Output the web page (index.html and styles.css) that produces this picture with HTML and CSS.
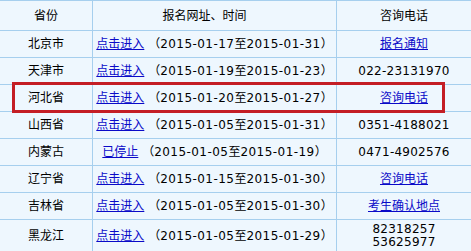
FILE: index.html
```html
<!DOCTYPE html>
<html lang="zh-CN">
<head>
<meta charset="utf-8">
<title>报名网址、时间</title>
<link rel="stylesheet" href="styles.css">
</head>
<body>
<div class="wrap">
  <table class="info">
    <colgroup>
      <col class="c1"><col class="c2"><col class="c3">
    </colgroup>
    <tr class="head">
      <td>省份</td>
      <td class="mid headmid">报名网址、时间</td>
      <td>咨询电话</td>
    </tr>
    <tr>
      <td>北京市</td>
      <td class="mid"><a href="#">点击进入</a> （<span class="d">2015-01-17</span>至<span class="d">2015-01-31</span>）</td>
      <td><a href="#">报名通知</a></td>
    </tr>
    <tr>
      <td>天津市</td>
      <td class="mid"><a href="#">点击进入</a> （<span class="d">2015-01-19</span>至<span class="d">2015-01-23</span>）</td>
      <td class="p">022-23131970</td>
    </tr>
    <tr>
      <td>河北省</td>
      <td class="mid"><a href="#">点击进入</a> （<span class="d">2015-01-20</span>至<span class="d">2015-01-27</span>）</td>
      <td><a href="#">咨询电话</a></td>
    </tr>
    <tr>
      <td>山西省</td>
      <td class="mid"><a href="#">点击进入</a> （<span class="d">2015-01-05</span>至<span class="d">2015-01-31</span>）</td>
      <td class="p">0351-4188021</td>
    </tr>
    <tr>
      <td>内蒙古</td>
      <td class="mid"><a href="#">已停止</a> （<span class="d">2015-01-05</span>至<span class="d">2015-01-19</span>）</td>
      <td class="p">0471-4902576</td>
    </tr>
    <tr>
      <td>辽宁省</td>
      <td class="mid"><a href="#">点击进入</a> （<span class="d">2015-01-15</span>至<span class="d">2015-01-30</span>）</td>
      <td><a href="#">咨询电话</a></td>
    </tr>
    <tr>
      <td>吉林省</td>
      <td class="mid"><a href="#">点击进入</a> （<span class="d">2015-01-05</span>至<span class="d">2015-01-30</span>）</td>
      <td><a href="#">考生确认地点</a></td>
    </tr>
    <tr class="last">
      <td>黑龙江</td>
      <td class="mid"><a href="#">点击进入</a> （<span class="d">2015-01-05</span>至<span class="d">2015-01-29</span>）</td>
      <td class="p two">82318257<br>53625977</td>
    </tr>
  </table>
  <div class="mark"></div>
</div>
</body>
</html>
```

FILE: styles.css
```css
html, body {
  margin: 0;
  padding: 0;
  background: #eef7fe;
}
.wrap {
  position: relative;
  width: 471px;
}
.info {
  width: 471px;
  table-layout: fixed;
  border-collapse: separate;
  border-spacing: 0;
  border-top: 1px solid #a6cfee;
  background: #eef7fe;
  font-family: "DejaVu Sans", "Noto Sans CJK SC", sans-serif;
  font-size: 12px;
  color: #000;
}
.c1 { width: 93px; }
.c2 { width: 244px; }
.c3 { width: 134px; }
.info td {
  box-sizing: border-box;
  height: 27px;
  padding: 0;
  text-align: center;
  vertical-align: middle;
  white-space: nowrap;
  border-bottom: 1px solid #a6cfee;
  border-right: 1px solid #a6cfee;
  line-height: 14px;
}
.info td:last-child {
  border-right: 0;
}
.head td {
  height: 30px;
}
.headmid {
  padding-right: 20px !important;
}
.last td {
  height: 32px;
}
.info a {
  color: #0a0ac8;
  text-decoration: underline;
}
.d {
  letter-spacing: 0.45px;
}
.p {
  letter-spacing: 0.25px;
}
.two {
  line-height: 13px !important;
}
.mark {
  position: absolute;
  left: 12px;
  top: 82px;
  width: 433px;
  height: 31px;
  box-sizing: border-box;
  border: 3px solid #c41e25;
}
```
